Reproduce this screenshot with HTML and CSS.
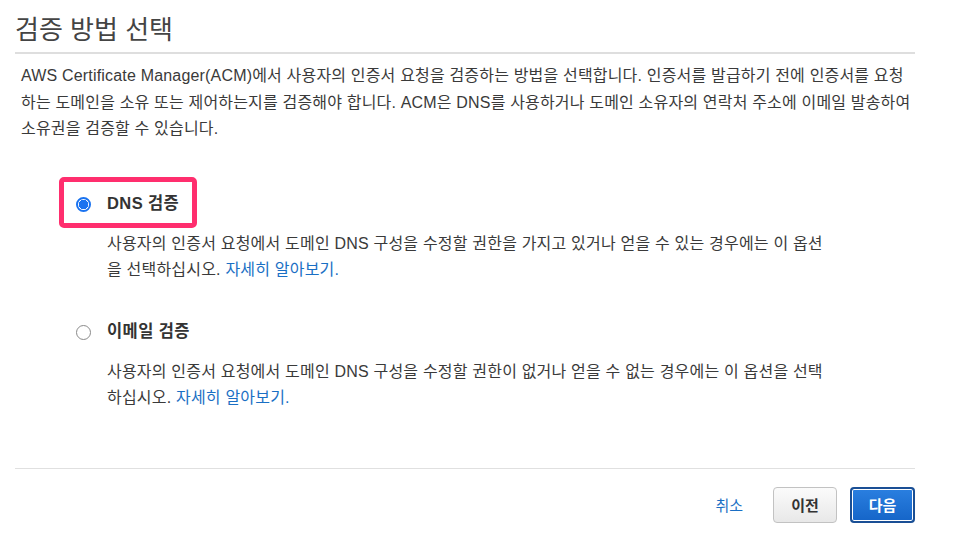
FILE: index.html
```html
<!DOCTYPE html>
<html lang="ko">
<head>
<meta charset="utf-8">
<link rel="stylesheet" href="styles.css">
</head>
<body>
<div class="page">
  <h1 class="title">검증 방법 선택</h1>
  <p class="intro">AWS Certificate Manager(ACM)에서 사용자의 인증서 요청을 검증하는 방법을 선택합니다. 인증서를 발급하기 전에 인증서를 요청<br>하는 도메인을 소유 또는 제어하는지를 검증해야 합니다. ACM은 DNS를 사용하거나 도메인 소유자의 연락처 주소에 이메일 발송하여<br>소유권을 검증할 수 있습니다.</p>
  <div class="options">
    <div class="option">
      <div class="option-head highlighted">
        <span class="radio checked"></span>
        <span class="option-label">DNS 검증</span>
      </div>
      <p class="option-desc">사용자의 인증서 요청에서 도메인 DNS 구성을 수정할 권한을 가지고 있거나 얻을 수 있는 경우에는 이 옵션<br>을 선택하십시오. <a class="link" href="#">자세히 알아보기.</a></p>
    </div>
    <div class="option">
      <div class="option-head">
        <span class="radio"></span>
        <span class="option-label">이메일 검증</span>
      </div>
      <p class="option-desc">사용자의 인증서 요청에서 도메인 DNS 구성을 수정할 권한이 없거나 얻을 수 없는 경우에는 이 옵션을 선택<br>하십시오. <a class="link" href="#">자세히 알아보기.</a></p>
    </div>
  </div>
  <div class="footer">
    <a class="cancel" href="#">취소</a>
    <button class="btn">이전</button>
    <button class="btn primary">다음</button>
  </div>
</div>
</body>
</html>
```
FILE: styles.css
```css
* { box-sizing: border-box; }
body {
  margin: 0;
  background: #fff;
  font-family: "Liberation Sans", "Noto Sans CJK KR", sans-serif;
  color: #3a3a3a;
}
.page {
  width: 900px;
  margin-left: 15px;
}
.title {
  margin: 13px 0 0;
  padding-bottom: 5px;
  font-size: 26px;
  line-height: 34px;
  font-weight: normal;
  color: #444;
  border-bottom: 2px solid #dedede;
}
.intro {
  margin: 9px 0 0;
  padding-left: 6px;
  font-size: 16px;
  letter-spacing: 0.18px;
  line-height: 26.5px;
  white-space: nowrap;
}
.options {
  margin-top: 34px;
  padding-left: 44px;
}
.option + .option { margin-top: 22px; }
.option-head {
  display: inline-flex;
  align-items: center;
  gap: 16px;
  height: 51px;
  padding: 0 13px 0 12px;
  border: 5px solid transparent;
  border-radius: 5px;
}
.option-head.highlighted {
  border-color: #ff2e6e;
}
.radio {
  width: 15px;
  height: 15px;
  border-radius: 50%;
  border: 1px solid #8a8a8a;
  background: #fff;
  margin-top: 4px;
}
.radio.checked {
  border: 2px solid #1a73f0;
  background: radial-gradient(circle, #1a73f0 0 4.5px, #fff 5px);
}
.option-label {
  font-size: 16.5px;
  font-weight: bold;
  color: #333;
  letter-spacing: 0.4px;
}
.option-desc {
  margin: 3px 0 0;
  padding-left: 48px;
  font-size: 16px;
  letter-spacing: 0.2px;
  line-height: 26px;
  white-space: nowrap;
}
.link {
  color: #1a6fc4;
  text-decoration: none;
}
.footer {
  margin-top: 57px;
  border-top: 1px solid #e0e0e0;
  padding-top: 18px;
  display: flex;
  justify-content: flex-end;
  align-items: center;
  gap: 13px;
}
.cancel {
  color: #1a6fc4;
  text-decoration: none;
  font-size: 15px;
  margin-right: 17px;
}
.btn {
  width: 64px;
  height: 36px;
  border: 1px solid #c2c2c2;
  border-radius: 4px;
  background: linear-gradient(#fbfbfb, #e8e8e8);
  font-family: "Liberation Sans", "Noto Sans CJK KR", sans-serif;
  font-size: 15px;
  font-weight: bold;
  color: #333;
  padding: 0;
}
.btn.primary {
  width: 65px;
  border: 2px solid #1a4f95;
  box-shadow: inset 0 0 0 1px #fff;
  background: linear-gradient(#2a7fe0, #1565c8);
  color: #fff;
}
```
